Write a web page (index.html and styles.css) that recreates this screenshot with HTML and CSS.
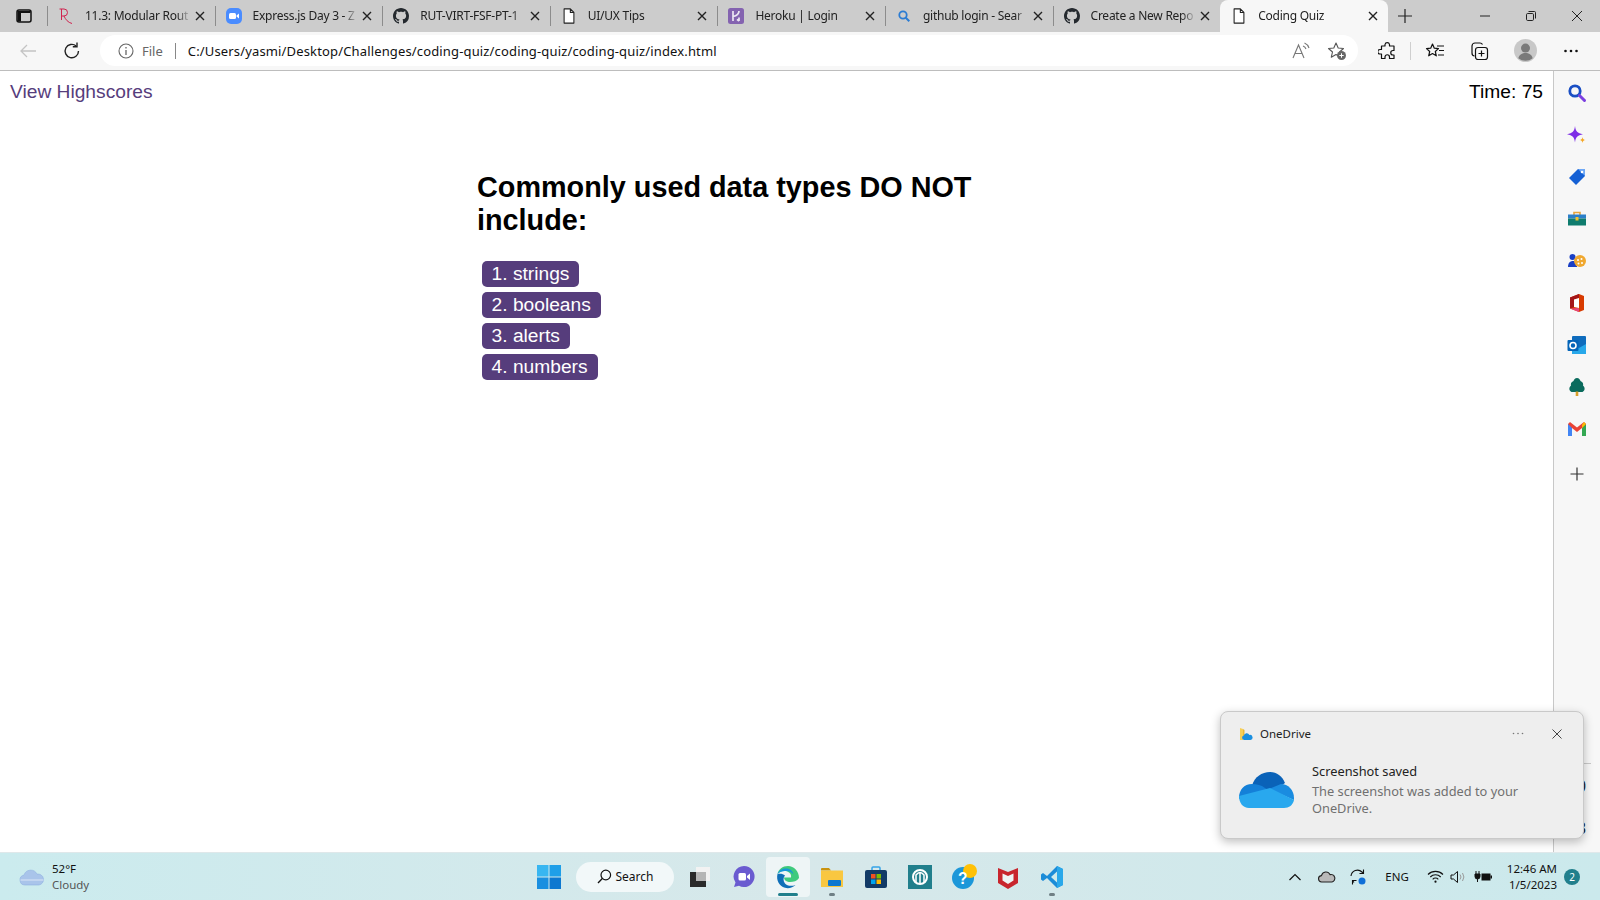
FILE: index.html
```html
<!DOCTYPE html>
<html>
<head>
    <title>Coding Quiz</title>
    <link rel="stylesheet" href="styles.css">
</head>
<body>
    <svg class="defs" width="0" height="0">
        <symbol id="i-x" viewBox="0 0 12 12"><path d="M2 2l8 8M10 2l-8 8" fill="none" stroke="#222" stroke-width="1.4"/></symbol>
        <symbol id="i-doc" viewBox="0 0 16 18"><path d="M2.500 1h7l4 4v12h-11zM9.500 1v4h4" fill="#fff" stroke="#222" stroke-width="1.2" stroke-linejoin="round"/></symbol>
        <symbol id="i-gh" viewBox="0 0 16 16"><path fill="#24292e" d="M8 0C3.58 0 0 3.58 0 8c0 3.54 2.29 6.530 5.47 7.59.4.07.55-.17.55-.38 0-.19-.01-.82-.01-1.490-2.010.37-2.530-.49-2.690-.94-.09-.23-.48-.94-.82-1.130-.28-.15-.68-.52-.01-.53.63-.01 1.080.58 1.230.82.72 1.210 1.870.87 2.330.66.07-.52.28-.87.51-1.070-1.780-.2-3.640-.89-3.640-3.950 0-.87.31-1.590.82-2.150-.08-.2-.36-1.020.08-2.120 0 0 .67-.21 2.200.82.64-.18 1.320-.27 2-.27.68 0 1.360.09 2 .27 1.530-1.040 2.200-.82 2.200-.82.44 1.100.16 1.920.08 2.120.51.56.82 1.270.82 2.150 0 3.070-1.870 3.750-3.650 3.950.29.25.54.73.54 1.480 0 1.070-.01 1.930-.01 2.200 0 .21.15.46.55.38A8.013 8.013 0 0016 8c0-4.420-3.580-8-8-8z"/></symbol>
    </svg>

    <div class="tabstrip">
        <div class="tab-actions">
            <svg width="16" height="16" viewBox="0 0 16 16"><rect x="1" y="2" width="14" height="12" rx="2" fill="none" stroke="#111" stroke-width="1.5"/><path d="M1.500 3h13v2h-13zM1.500 5h3.500v8.500h-3.500z" fill="#111"/></svg>
        </div>
        <div class="tab">
            <svg class="favicon" viewBox="0 0 16 16"><path d="M3.500 1v11M1.500 1h4.500a3.300 3.300 0 010 7H3.500M6 8c1.500 3.500 4 6.500 8 7.500" fill="none" stroke="#d0234f" stroke-width="1"/></svg>
            <span class="tab-title">11.3: Modular Rout</span>
            <svg class="tab-close"><use href="#i-x"/></svg>
        </div>
        <div class="tab">
            <svg class="favicon" viewBox="0 0 16 16"><rect width="16" height="16" rx="5" fill="#4a8cff"/><rect x="3" y="5" width="7" height="6" rx="1.500" fill="#fff"/><path d="M10.500 7.500l2.500-2v5l-2.500-2z" fill="#fff"/></svg>
            <span class="tab-title">Express.js Day 3 - Z</span>
            <svg class="tab-close"><use href="#i-x"/></svg>
        </div>
        <div class="tab">
            <svg class="favicon"><use href="#i-gh"/></svg>
            <span class="tab-title">RUT-VIRT-FSF-PT-1</span>
            <svg class="tab-close"><use href="#i-x"/></svg>
        </div>
        <div class="tab">
            <svg class="favicon"><use href="#i-doc"/></svg>
            <span class="tab-title">UI/UX Tips</span>
            <svg class="tab-close"><use href="#i-x"/></svg>
        </div>
        <div class="tab">
            <svg class="favicon" viewBox="0 0 16 16"><rect width="16" height="16" rx="2.500" fill="#8463b0"/><path d="M5 3v10M11 3c0 3-1.500 4.500-6 5.500M11 13V9.500M9 11.300l2 1.700" fill="none" stroke="#ece6f3" stroke-width="1.700"/></svg>
            <span class="tab-title">Heroku | Login</span>
            <svg class="tab-close"><use href="#i-x"/></svg>
        </div>
        <div class="tab">
            <svg class="favicon" viewBox="0 0 16 16"><circle cx="7" cy="7" r="3.700" fill="none" stroke="#2b7cd3" stroke-width="1.800"/><path d="M9.800 9.800l3.500 3.500" stroke="#2b7cd3" stroke-width="2"/></svg>
            <span class="tab-title">github login - Sear</span>
            <svg class="tab-close"><use href="#i-x"/></svg>
        </div>
        <div class="tab">
            <svg class="favicon"><use href="#i-gh"/></svg>
            <span class="tab-title">Create a New Repo</span>
            <svg class="tab-close"><use href="#i-x"/></svg>
        </div>
        <div class="tab tab-active">
            <svg class="favicon"><use href="#i-doc"/></svg>
            <span class="tab-title">Coding Quiz</span>
            <svg class="tab-close"><use href="#i-x"/></svg>
        </div>
        <div class="tab-new">
            <svg width="16" height="16" viewBox="0 0 16 16"><path d="M8 1v14M1 8h14" stroke="#222" stroke-width="1.200"/></svg>
        </div>
        <div class="win-controls">
            <div class="win-btn"><svg width="12" height="12" viewBox="0 0 12 12"><path d="M1 6h10" stroke="#222"/></svg></div>
            <div class="win-btn"><svg width="12" height="12" viewBox="0 0 12 12"><path d="M3.500 1.500h6a1 1 0 011 1v6" fill="none" stroke="#222"/><rect x="1.500" y="3.500" width="7" height="7" rx="1.200" fill="none" stroke="#222"/></svg></div>
            <div class="win-btn"><svg width="12" height="12" viewBox="0 0 12 12"><path d="M1 1l10 10M11 1L1 11" stroke="#222"/></svg></div>
        </div>
    </div>

    <div class="toolbar">
        <div class="tool-btn">
            <svg width="18" height="18" viewBox="0 0 18 18"><path d="M17 9H2M8 3L2 9l6 6" fill="none" stroke="#c4c4c4" stroke-width="1.300"/></svg>
        </div>
        <div class="tool-btn">
            <svg width="18" height="18" viewBox="0 0 18 18"><path d="M15.500 9A6.700 6.700 0 1113.200 4" fill="none" stroke="#222" stroke-width="1.400"/><path d="M14 0.500v4.200H9.800" fill="none" stroke="#222" stroke-width="1.400"/></svg>
        </div>
        <div class="addressbar">
            <svg width="16" height="16" viewBox="0 0 16 16"><circle cx="8" cy="8" r="7" fill="none" stroke="#666" stroke-width="1.100"/><path d="M8 7v5M8 4v1.500" stroke="#666" stroke-width="1.300"/></svg>
            <span class="addr-file">File</span>
            <span class="addr-sep"></span>
            <span class="addr-url">C:/Users/yasmi/Desktop/Challenges/coding-quiz/coding-quiz/coding-quiz/index.html</span>
            <svg class="addr-read" width="20" height="18" viewBox="0 0 20 18"><path d="M1 16L6.500 3 12 16M3 11.500h7" fill="none" stroke="#777" stroke-width="1.100"/><path d="M11 4a5 5 0 013 3M12.500 1a8 8 0 014.500 5" fill="none" stroke="#777" stroke-width="1.100"/></svg>
            <svg width="20" height="20" viewBox="0 0 20 20"><path d="M9 2l2.200 5 5.300.5-4 3.500 1.200 5.200L9 13.500l-4.700 2.700L5.500 11l-4-3.500L6.800 7z" fill="none" stroke="#555" stroke-width="1.100" stroke-linejoin="round"/><circle cx="14.500" cy="14.500" r="4.500" fill="#666"/><path d="M14.500 12.300v4.400M12.300 14.500h4.400" stroke="#fff"/></svg>
        </div>
        <div class="tool-btn tool-ext">
            <svg width="20" height="20" viewBox="0 0 20 20"><path d="M7 3.500a2.300 2.300 0 014.500 0V5H16v4.500h-1a2.200 2.200 0 000 4.500h1v3.500h-4.500V16a2.200 2.200 0 00-4.500 0v1.500H3.500V13H2a2.200 2.200 0 010-4.500h1.500V5H7z" fill="none" stroke="#111" stroke-width="1.200" stroke-linejoin="round"/></svg>
        </div>
        <span class="tool-sep"></span>
        <div class="tool-btn tool-fav">
            <svg width="20" height="20" viewBox="0 0 20 20"><path d="M7.500 3l1.800 4.200 4.200.4-3.200 2.900 1 4.300-3.800-2.300-3.800 2.300 1-4.300L1.500 7.600l4.200-.4z" fill="none" stroke="#111" stroke-width="1.200" stroke-linejoin="round"/><path d="M12 5h7M14 9.500h5M13 14h6" stroke="#111" stroke-width="1.200"/></svg>
        </div>
        <div class="tool-btn">
            <svg width="20" height="20" viewBox="0 0 20 20"><path d="M5.500 15A3 3 0 013 12V5a3 3 0 013-3h5a3 3 0 012.500 1.500" fill="none" stroke="#111" stroke-width="1.200"/><rect x="6.500" y="6.500" width="12" height="12" rx="2.500" fill="none" stroke="#111" stroke-width="1.200"/><path d="M12.500 9.500v6M9.500 12.500h6" stroke="#111" stroke-width="1.200"/></svg>
        </div>
        <div class="tool-btn tool-profile">
            <svg width="23" height="23" viewBox="0 0 24 24"><circle cx="12" cy="12" r="12" fill="#c8c8c8"/><circle cx="12" cy="9.500" r="4.700" fill="#7a7a7a"/><path d="M4.500 20c1-4 4-5.500 7.500-5.500s6.500 1.500 7.500 5.500a12 12 0 01-15 0z" fill="#7a7a7a"/></svg>
        </div>
        <div class="tool-btn tool-menu">
            <svg width="16" height="4" viewBox="0 0 16 4"><circle cx="2.500" cy="2" r="1.300" fill="#111"/><circle cx="8" cy="2" r="1.300" fill="#111"/><circle cx="13.500" cy="2" r="1.300" fill="#111"/></svg>
        </div>
    </div>

    <div class="viewport">
        <main class="page">
            <header class="page-head">
                <a class="highscores" href="#">View Highscores</a>
                <span class="timer">Time: 75</span>
            </header>
            <section class="quiz">
                <h1>Commonly used data types DO NOT include:</h1>
                <ul class="choices">
                    <li><button class="choice">1. strings</button></li>
                    <li><button class="choice">2. booleans</button></li>
                    <li><button class="choice">3. alerts</button></li>
                    <li><button class="choice">4. numbers</button></li>
                </ul>
            </section>
        </main>
        <aside class="sidebar">
            <svg viewBox="0 0 20 20"><circle cx="8" cy="8" r="5.200" fill="none" stroke="#1a4fc4" stroke-width="2.800"/><path d="M12.500 12.500l5 5" stroke="#7b3fe0" stroke-width="3" stroke-linecap="round"/></svg>
            <svg viewBox="0 0 20 20"><path d="M8 1c.8 5.500 2.200 7 8 8.200-5.800 1.200-7.200 2.700-8 8.200-.8-5.500-2.200-7-8-8.200C5.800 8 7.200 6.500 8 1z" fill="#7d2ee6"/><path d="M15.500 12c.3 2 .8 2.600 3 3-2.200.4-2.700 1-3 3-.3-2-.8-2.600-3-3 2.200-.4 2.700-1 3-3z" fill="#f5a623"/></svg>
            <svg viewBox="0 0 20 20"><path d="M11 2h7v7l-9 9-7-7z" fill="#1560d4"/><path d="M11 2h7v7z" fill="#6fa8f5"/><circle cx="15" cy="5" r="1.300" fill="#fff"/></svg>
            <svg viewBox="0 0 20 20"><path d="M7 6V3.500h6V6" fill="none" stroke="#e8a33a" stroke-width="1.600"/><rect x="1" y="5.500" width="18" height="4" fill="#2c7fc9"/><rect x="1" y="9.500" width="18" height="7" fill="#0f7c6e"/><rect x="8.500" y="8" width="3" height="3.500" fill="#f2c12e"/></svg>
            <svg viewBox="0 0 20 20"><circle cx="5.500" cy="6" r="3" fill="#1a3fc4"/><path d="M1 16c0-4 2-6 5-6s4 2 4 6z" fill="#1a3fc4"/><circle cx="13" cy="10" r="6" fill="#f0a830"/><circle cx="11" cy="9" r="1" fill="#fff"/><circle cx="14.500" cy="8" r="1" fill="#fff"/><circle cx="15" cy="12" r="1" fill="#fff"/><circle cx="11.500" cy="12.500" r="1" fill="#fff"/></svg>
            <svg viewBox="0 0 20 20"><path d="M3 4.500L12 1l5 2v14l-5 2-9-3.500z" fill="#d83b01"/><path d="M3 4.500L12 1v4L7 6.500v7.500l-4 1.500z" fill="#a4161a"/><path d="M3 15.500L12 15v4z" fill="#e8467c"/><path d="M7 6.500L12 5v10l-5-1z" fill="#fff"/></svg>
            <svg viewBox="0 0 20 20"><rect x="5" y="1" width="14" height="18" rx="1" fill="#0f6cbd"/><path d="M5 9l7 4 7-4v10H5z" fill="#28a8ea"/><rect x="0.500" y="5" width="11" height="11" rx="1" fill="#0364b8"/><circle cx="6" cy="10.500" r="3" fill="none" stroke="#fff" stroke-width="1.600"/></svg>
            <svg viewBox="0 0 20 20"><path d="M10 1c2 0 3 1.500 3.500 3C16 5 16.500 7 16 8.500c2 1.500 2.500 5-.5 6.500h-11C1.500 13.500 2 10 4 8.500 3.500 7 4 5 6.500 4 7 2.500 8 1 10 1z" fill="#0b6b5d"/><rect x="8.700" y="14.500" width="2.600" height="4.500" fill="#d9a02a"/></svg>
            <svg viewBox="0 0 20 20"><path d="M1 5v12h4V9l5 4 5-4v8h4V5l-2-2-7 5.500L3 3z" fill="#ea4335"/><path d="M1 5v12h4V9z" fill="#4285f4"/><path d="M15 9v8h4V5z" fill="#34a853"/><path d="M17 3l2 2-4 4V6z" fill="#fbbc04"/></svg>
            <svg class="side-add" viewBox="0 0 20 20"><path d="M10 3.500v13M3.500 10h13" stroke="#333" stroke-width="1.200"/></svg>
        </aside>
    </div>

    <div class="taskbar">
        <div class="weather">
            <svg width="26" height="18" viewBox="0 0 26 18"><path d="M6 17a5 5 0 01-1-9.900 7 7 0 0113-1A5.500 5.500 0 0120 17z" fill="#a9c4ea" stroke="#8fb0e0" stroke-width="0.600"/><path d="M1.500 12h23" stroke="#dbe6f6" stroke-width="1"/></svg>
            <div class="weather-text">
                <span>52°F</span>
                <span class="muted">Cloudy</span>
            </div>
        </div>
        <div class="task-center">
            <svg class="start" width="24" height="24" viewBox="0 0 24 24"><rect width="11.500" height="11.500" fill="#38b6f1"/><rect x="12.500" width="11.500" height="11.500" fill="#1f9fe8"/><rect y="12.500" width="11.500" height="11.500" fill="#1a8fe0"/><rect x="12.500" y="12.500" width="11.500" height="11.500" fill="#0d78d0"/></svg>
            <div class="search-pill">
                <svg width="15" height="15" viewBox="0 0 15 15"><circle cx="8.800" cy="6" r="4.800" fill="none" stroke="#111" stroke-width="1.200"/><path d="M5.300 9.500L1 14" stroke="#111" stroke-width="1.300"/></svg>
                <span>Search</span>
            </div>
            <div class="task-icon">
                <svg width="24" height="24" viewBox="0 0 24 24"><rect x="8" y="2" width="14" height="14" fill="#f2f2f2"/><rect x="2" y="7" width="16" height="15" fill="#2a2a2a"/><rect x="8" y="7" width="10" height="9" fill="#b5b5b5"/></svg>
            </div>
            <div class="task-icon">
                <svg width="24" height="24" viewBox="0 0 24 24"><path d="M12 1a10.500 10.500 0 11-5 19.700L2 22l1.500-4.500A10.500 10.500 0 0112 1z" fill="#6a5bd0"/><rect x="6.500" y="8" width="7.500" height="7.500" rx="1.500" fill="#fff"/><path d="M15 11l3-2.500v6.500L15 12.500z" fill="#fff"/></svg>
            </div>
            <div class="task-icon task-active">
                <svg width="24" height="24" viewBox="0 0 24 24"><path d="M23 13C23 6 18 1 12 1 6.500 1 2.500 4.500 1.500 9 4 6 8 5 11.500 6.500c3 1.300 4 3.500 3.500 6h-7c.2 3 3 4.500 6 4.500 3.500 0 7-1 9-4z" fill="#3fca7d"/><path d="M1.500 9C0 15 3 21 9 22.800c4 1 8-.3 10.500-2.800-4 1.500-8.500 1-10.500-1.500-2-2.500-2-6 0-8-2-2-5-2-7.500-1.500z" fill="#0f6fb8"/><path d="M1.500 9C3 5 7 3 11 3.500c3.500.5 6 3 6.500 6-2-3-5.500-4-9-3.500-3 .4-5.500 1.500-7 3z" fill="#1797d9"/></svg>
                <i class="running wide"></i>
            </div>
            <div class="task-icon">
                <svg width="24" height="24" viewBox="0 0 24 24"><path d="M1 4a1 1 0 011-1h7l2 2.500h-10z" fill="#c9920e"/><path d="M1 5.500h22V22H1z" fill="#f9c740"/><rect x="8" y="15" width="13" height="6" rx="1" fill="#0d78d0"/></svg>
                <i class="running"></i>
            </div>
            <div class="task-icon">
                <svg width="24" height="24" viewBox="0 0 24 24"><path d="M8 5V3a1 1 0 011-1h6a1 1 0 011 1v2" fill="none" stroke="#35a3e8" stroke-width="1.500"/><rect x="1" y="5" width="22" height="18" rx="2" fill="#123a66"/><rect x="7" y="9" width="4.500" height="4.500" fill="#f05022"/><rect x="12.500" y="9" width="4.500" height="4.500" fill="#7fba00"/><rect x="7" y="14.500" width="4.500" height="4.500" fill="#00a4ef"/><rect x="12.500" y="14.500" width="4.500" height="4.500" fill="#ffb900"/></svg>
            </div>
            <div class="task-icon">
                <svg width="24" height="24" viewBox="0 0 24 24"><rect width="24" height="24" fill="#217f8c"/><circle cx="12" cy="12" r="7" fill="none" stroke="#fff" stroke-width="2"/><path d="M8 18V10q4-5 8 0v8M12 8v10" fill="none" stroke="#fff" stroke-width="1.500"/></svg>
            </div>
            <div class="task-icon">
                <svg width="28" height="28" viewBox="0 0 28 28"><circle cx="13" cy="15" r="11" fill="#1c97d9"/><circle cx="20" cy="8" r="7" fill="#ffc107"/><text x="13" y="21" class="help-mark">?</text></svg>
            </div>
            <div class="task-icon">
                <svg width="24" height="24" viewBox="0 0 24 24"><path d="M2 3l10 4 10-4v15l-10 6L2 18z" fill="#c8252d"/><path d="M6.500 8.500L12 11l5.500-2.500v7L12 19l-5.500-3.500z" fill="#eef4f4"/></svg>
            </div>
            <div class="task-icon">
                <svg width="24" height="24" viewBox="0 0 24 24"><path d="M17 1l6 3v16l-6 3L7 13l-4 3-2-1.500v-5L3 8l4 3z" fill="#1b8cd8"/><path d="M17 6.500L11 12l6 5.500z" fill="#cdeaec"/><path d="M17 1l6 3v16l-6 3z" fill="#29a8ea"/></svg>
                <i class="running"></i>
            </div>
        </div>
        <div class="tray">
            <svg width="14" height="8" viewBox="0 0 14 8"><path d="M1.500 7L7 1.500 12.500 7" fill="none" stroke="#111" stroke-width="1.200"/></svg>
            <svg class="tray-cloud" width="18" height="12" viewBox="0 0 18 12"><path d="M4 11a3.200 3.200 0 01-.5-6.400 4.500 4.500 0 018.500-1A3.800 3.800 0 0114 11z" fill="#b9b9b9" stroke="#222" stroke-width="1.100"/></svg>
            <svg class="tray-sync" width="18" height="18" viewBox="0 0 18 18"><path d="M2 8a6.500 6.500 0 0111-4l1.500 1.500M14.500 1.500v4h-4M3.500 12.500l1.500 2M3.500 16.500v-4h4" fill="none" stroke="#111" stroke-width="1.100"/><circle cx="13" cy="13" r="3.500" fill="#0f6fd8"/></svg>
            <span class="tray-lang">ENG</span>
            <svg class="tray-wifi" width="17" height="13" viewBox="0 0 17 13"><path d="M1 4.500a10.500 10.500 0 0115 0M3.300 7a7.200 7.200 0 0110.400 0M5.700 9.300a3.800 3.800 0 015.600 0" fill="none" stroke="#111" stroke-width="1.100"/><circle cx="8.500" cy="11.700" r="1.100" fill="#111"/></svg>
            <svg class="tray-vol" width="17" height="14" viewBox="0 0 17 14"><path d="M1 5h2.500L7.500 1.500v11L3.500 9H1z" fill="none" stroke="#111"/><path d="M10 4.500a4 4 0 010 5M12.500 3a7 7 0 010 8" fill="none" stroke="#999"/></svg>
            <svg class="tray-bat" width="18" height="12" viewBox="0 0 18 12"><path d="M2 0v3M5 0v3M1 3h5v2.500a2.500 2.500 0 01-5 0zM3.500 8v3" fill="#111" stroke="#111"/><rect x="7.500" y="2.500" width="9" height="7" fill="#111"/><rect x="16.500" y="4.500" width="1.500" height="3" fill="#111"/></svg>
            <div class="clock">
                <span>12:46 AM</span>
                <span>1/5/2023</span>
            </div>
            <span class="badge">2</span>
        </div>
    </div>

    <div class="peek-line"></div>
    <span class="peek-digit peek-top">0</span>
    <span class="peek-digit peek-bottom">3</span>

    <div class="toast">
        <div class="toast-head">
            <svg width="14" height="14" viewBox="0 0 14 14"><path d="M1 1l3 1v11H1z" fill="#f7cf57"/><path d="M4 2l1.500 1v8H4z" fill="#e8b83a"/><path d="M5 13a2.300 2.300 0 01-.2-4.500 3 3 0 015.600-.6A2.600 2.600 0 0111.500 13z" fill="#1a8fe0"/></svg>
            <span class="toast-app">OneDrive</span>
            <svg class="toast-more" width="12" height="3" viewBox="0 0 12 3"><circle cx="1.500" cy="1.500" r="0.800" fill="#777"/><circle cx="6" cy="1.500" r="0.800" fill="#777"/><circle cx="10.500" cy="1.500" r="0.800" fill="#777"/></svg>
            <svg class="toast-close" width="10" height="10" viewBox="0 0 10 10"><path d="M.5.500l9 9M9.500.500l-9 9" stroke="#444"/></svg>
        </div>
        <div class="toast-body">
            <svg width="55" height="36" viewBox="0 0 55 36"><path d="M13 14C15 5 23 0 31 0c7 0 12 4 15 11L30 22z" fill="#0a62b8"/><path d="M0 26C0 18 5 12 13 12c5 0 9 1 13 4l6 4L4 32z" fill="#1480d8"/><path d="M42 12c7 0 13 6 13 14v2L30 17z" fill="#1a8ce0"/><path d="M0 24l31-8 24 12c-1 5-5 8-10 8H10C4 36 0 31 0 24z" fill="#29a8ee"/></svg>
            <div class="toast-text">
                <div class="toast-title">Screenshot saved</div>
                <div class="toast-msg">The screenshot was added to your OneDrive.</div>
            </div>
        </div>
    </div>
</body>
</html>
```

FILE: styles.css
```css
* {
    box-sizing: border-box;
}

body {
    margin: 0;
    height: 900px;
    overflow: hidden;
    display: flex;
    flex-direction: column;
    font-family: "Liberation Sans", Arial, sans-serif;
    background: #fff;
}

.defs {
    display: block;
}

/* tabs */
.tabstrip {
    height: 32px;
    display: flex;
    align-items: stretch;
    background: #cccccc;
    font-family: "Noto Sans", sans-serif;
    font-size: 12px;
    color: #222;
}

.tab-actions {
    width: 47px;
    display: flex;
    align-items: center;
    padding-left: 16px;
}

.tab {
    width: 167.6px;
    display: flex;
    align-items: center;
}

.tab::before {
    content: "";
    width: 1px;
    height: 20px;
    background: #8c8c8c;
    margin-right: 10px;
}

.tab-active {
    background: #f7f7f7;
    border-radius: 8px 8px 0 0;
}

.tab-active::before {
    background: transparent;
}

.favicon {
    width: 16px;
    height: 16px;
    flex: none;
    margin-right: 11px;
}

.tab-title {
    flex: 1;
    min-width: 0;
    margin-top: -2px;
    white-space: nowrap;
    letter-spacing: -0.25px;
    -webkit-mask-image: linear-gradient(to left, transparent, #000 14px);
    mask-image: linear-gradient(to left, transparent, #000 14px);
}

.tab-close {
    width: 12px;
    height: 12px;
    flex: none;
    margin: 0 9px 0 3px;
}

.tab-new {
    width: 34px;
    display: flex;
    align-items: center;
    justify-content: center;
}

.win-controls {
    margin-left: auto;
    display: flex;
}

.win-btn {
    width: 46px;
    display: flex;
    align-items: center;
    justify-content: center;
}

/* toolbar */
.toolbar {
    height: 39px;
    display: flex;
    align-items: center;
    padding: 0 0 1px 6px;
    background: #f7f7f7;
    border-bottom: 1px solid #bdbdbd;
}

.tool-btn {
    width: 44px;
    height: 30px;
    flex: none;
    display: flex;
    align-items: center;
    justify-content: center;
}

.tool-ext {
    margin-left: 8px;
}

.tool-sep {
    width: 1px;
    height: 18px;
    background: #cfcfcf;
}

.tool-fav {
    margin-left: 2px;
}

.tool-profile {
    margin-left: 2px;
}

.tool-menu {
    margin-left: 2px;
}

.addressbar {
    width: 1258px;
    height: 31px;
    margin-left: 6px;
    flex: none;
    display: flex;
    align-items: center;
    padding: 0 11px 0 18px;
    background: #fff;
    border-radius: 16px;
    font-family: "Noto Sans", sans-serif;
    font-size: 13px;
    color: #111;
}

.addr-file {
    margin-left: 8px;
    color: #666;
}

.addr-sep {
    width: 1px;
    height: 16px;
    background: #888;
    margin: 0 12px;
}

.addr-url {
    letter-spacing: 0.15px;
}

.addr-read {
    margin-left: auto;
    margin-right: 15px;
}

/* page */
.viewport {
    flex: 1;
    min-height: 0;
    display: flex;
}

.page {
    flex: 1;
    min-width: 0;
}

.page-head {
    display: flex;
    justify-content: space-between;
    padding: 10px 10px 7px;
    font-size: 19.2px;
}

.highscores {
    color: #563d7c;
    text-decoration: none;
}

.quiz {
    width: 520px;
    margin: 61px 0 0 477px;
}

h1 {
    margin: 0 0 24px;
    font-size: 28.8px;
}

.choices {
    list-style: none;
    margin: 0;
    padding: 0 0 0 5px;
}

.choices li {
    margin-bottom: 5px;
    line-height: 0;
}

.choice {
    height: 26px;
    padding: 0 10px 0 9.6px;
    border: 0;
    border-radius: 5px;
    background: #563d7c;
    color: #fff;
    font-family: inherit;
    font-size: 19.2px;
}

.sidebar {
    width: 47px;
    flex: none;
    display: flex;
    flex-direction: column;
    align-items: center;
    gap: 22px;
    padding-top: 12px;
    background: #f7f7f7;
    border-left: 1px solid #c8c8c8;
}

.sidebar svg {
    width: 20px;
    height: 20px;
    flex: none;
}

.sidebar .side-add {
    margin-top: 3px;
}

/* taskbar */
.taskbar {
    height: 48px;
    flex: none;
    display: flex;
    align-items: center;
    background: linear-gradient(to right, #cbebee, #d7e8ea 50%, #cbe9ec);
    border-top: 1px solid #dfe8ea;
    font-family: "Noto Sans", sans-serif;
    font-size: 12px;
    color: #111;
}

.weather {
    width: 525px;
    flex: none;
    display: flex;
    align-items: center;
    gap: 7px;
    padding-left: 19px;
}

.weather-text {
    display: flex;
    flex-direction: column;
    line-height: 16px;
    font-size: 11.5px;
}

.muted {
    color: #555;
}

.task-center {
    display: flex;
    align-items: center;
}

.start {
    margin-left: 12px;
}

.search-pill {
    width: 98px;
    height: 30px;
    margin: 0 4px 0 15px;
    display: flex;
    align-items: center;
    justify-content: center;
    gap: 4px;
    background: #f2f8f9;
    border-radius: 15px;
    font-size: 12px;
}

.task-icon {
    width: 44px;
    height: 40px;
    flex: none;
    position: relative;
    display: flex;
    align-items: center;
    justify-content: center;
}

.task-active {
    background: #eef5f6;
    border-radius: 4px;
}

.running {
    position: absolute;
    left: 19px;
    bottom: 1px;
    width: 6px;
    height: 3px;
    border-radius: 2px;
    background: #6f7f84;
}

.running.wide {
    left: 12px;
    width: 20px;
    background: #217f8c;
}

.help-mark {
    font-family: "Liberation Sans", sans-serif;
    font-size: 16px;
    font-weight: bold;
    fill: #fff;
    text-anchor: middle;
}

.tray {
    margin-left: auto;
    display: flex;
    align-items: center;
    padding-right: 20px;
}

.tray-cloud {
    margin-left: 16px;
}

.tray-sync {
    margin-left: 13px;
}

.tray-lang {
    margin-left: 18px;
    font-size: 11.5px;
}

.tray-wifi {
    margin-left: 18px;
}

.tray-vol {
    margin-left: 6px;
}

.tray-bat {
    margin-left: 7px;
}

.clock {
    margin-left: 15px;
    display: flex;
    flex-direction: column;
    align-items: flex-end;
    line-height: 16px;
    font-size: 11.5px;
}

.badge {
    width: 16px;
    height: 16px;
    margin-left: 7px;
    border-radius: 50%;
    background: #217f8c;
    color: #fff;
    font-size: 10px;
    line-height: 16px;
    text-align: center;
}

/* bits of the page side panel showing past the notification */
.peek-line {
    position: absolute;
    left: 1553px;
    top: 763px;
    width: 38px;
    height: 1px;
    background: #c8c8c8;
}

.peek-digit {
    position: absolute;
    left: 1577px;
    font-size: 16px;
    line-height: 18px;
    color: #222;
}

.peek-top {
    top: 778px;
}

.peek-bottom {
    top: 820px;
}

/* notification, sits over the page */
.toast {
    position: absolute;
    left: 1220px;
    top: 711px;
    width: 364px;
    height: 128px;
    padding: 0 18px;
    background: #eeeeee;
    border: 1px solid #c9c9c9;
    border-radius: 8px;
    box-shadow: 0 3px 10px rgba(0, 0, 0, 0.25);
    font-family: "Noto Sans", sans-serif;
}

.toast-head {
    height: 43px;
    display: flex;
    align-items: center;
    font-size: 11.5px;
    color: #222;
}

.toast-app {
    margin-left: 7px;
}

.toast-more {
    margin-left: auto;
}

.toast-close {
    margin: 0 3px 0 28px;
}

.toast-body {
    display: flex;
    gap: 18px;
    align-items: flex-start;
    padding-top: 8px;
}

.toast-body svg {
    flex: none;
    margin-top: 9px;
}

.toast-text {
    width: 250px;
    font-size: 12.8px;
    line-height: 17.5px;
    color: #707070;
}

.toast-title {
    margin-bottom: 2px;
    color: #222;
}
```
